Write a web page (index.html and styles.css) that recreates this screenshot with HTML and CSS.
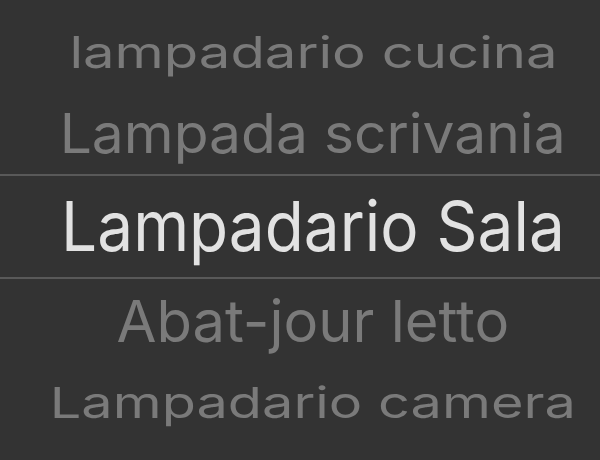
FILE: index.html
```html
<!DOCTYPE html>
<html lang="it">

<head>
    <meta charset="UTF-8">
    <meta name="viewport" content="width=device-width, initial-scale=1.0">
    <title>Picker</title>
    <link rel="stylesheet" href="styles.css">
</head>

<body>
    <div class="picker">
        <div class="row row-far-up"><span class="label">lampadario cucina</span></div>
        <div class="row row-near-up"><span class="label">Lampada scrivania</span></div>
        <div class="row row-selected"><span class="label">Lampadario Sala</span></div>
        <div class="row row-near-down"><span class="label">Abat-jour letto</span></div>
        <div class="row row-far-down"><span class="label">Lampadario camera</span></div>
    </div>
</body>

</html>
```

FILE: styles.css
```css
* {
    margin: 0;
    padding: 0;
    box-sizing: border-box;
}

html,
body {
    height: 100%;
}

body {
    background-color: #333333;
    font-family: "Inter", "Noto Sans", sans-serif;
    overflow: hidden;
}

.picker {
    display: flex;
    flex-direction: column;
    padding-top: 12px;
}

.row {
    display: flex;
    align-items: center;
    justify-content: center;
    padding-left: 26px;
    color: #7a7a7a;
}

.label {
    display: inline-block;
    font-size: 69px;
    line-height: 1;
    white-space: nowrap;
    transform-origin: center;
}

/* wheel rows, squeezed as they turn away */
.row-far-up {
    height: 80px;
}

.row-far-up .label {
    transform: scale(0.815, 0.64);
}

.row-near-up {
    height: 82px;
}

.row-near-up .label {
    transform: scale(0.825, 0.8);
}

.row-selected {
    height: 105px;
    border-top: 2px solid #595959;
    border-bottom: 2px solid #595959;
    color: #e2e2e2;
}

.row-selected .label {
    transform: scale(0.926, 1);
}

.row-near-down {
    height: 84px;
}

.row-near-down .label {
    transform: scale(0.84, 0.84);
}

.row-far-down {
    height: 78px;
}

.row-far-down .label {
    transform: scale(0.81, 0.62);
}
```
